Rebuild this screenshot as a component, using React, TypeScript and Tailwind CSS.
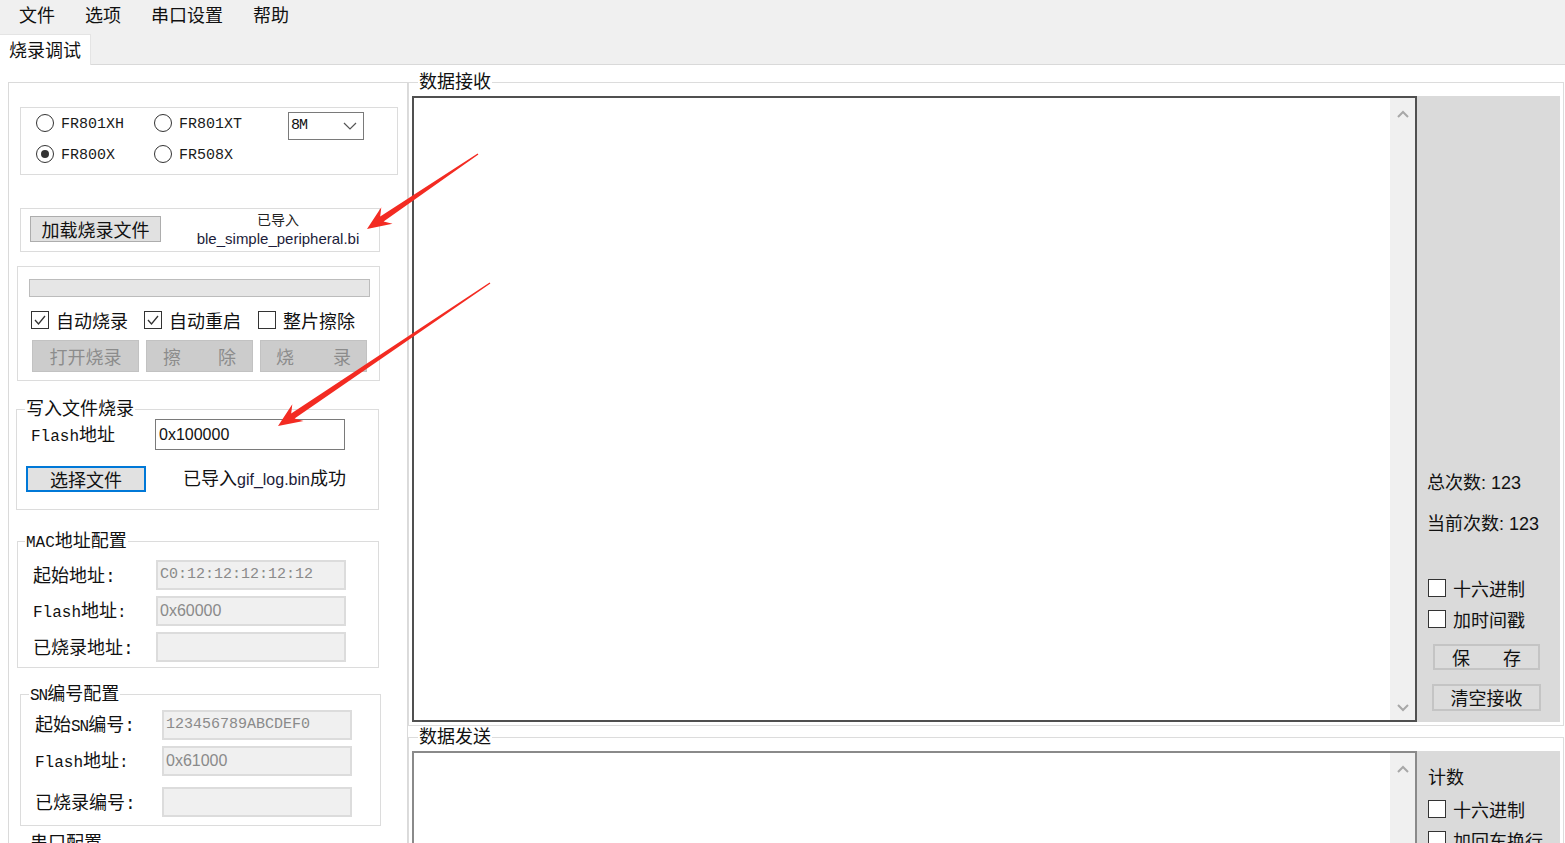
const cjk = "font-['Noto_Sans_CJK_SC','Noto_Sans',sans-serif]";
const mono = "font-['Liberation_Mono','Noto_Sans_CJK_SC',monospace]";
const sans = "font-['Liberation_Sans','Noto_Sans_CJK_SC',sans-serif]";

function Radio({ label, checked }: { label: string; checked?: boolean }) {
  return (
    <div className="flex items-center h-[24px] gap-[7px]">
      <span className="w-[18px] h-[18px] rounded-full border border-[#333] bg-white flex items-center justify-center">
        {checked && <span className="w-[8px] h-[8px] rounded-full bg-[#333]" />}
      </span>
      <span className={`${mono} relative top-[2px] text-[15px] text-[#1a1a1a]`}>{label}</span>
    </div>
  );
}

function Check({ label, checked, className = "" }: { label: string; checked?: boolean; className?: string }) {
  return (
    <div className={`flex items-center h-[22px] gap-[7px] ${className}`}>
      <span className="w-[18px] h-[18px] border border-[#333] bg-white flex items-center justify-center">
        {checked && (
          <svg width="14" height="14" viewBox="0 0 14 14">
            <polyline points="2,7 5.5,11 12,3" fill="none" stroke="#333" strokeWidth="1.3" />
          </svg>
        )}
      </span>
      <span className={`${cjk} text-[18px] leading-[22px] text-[#111]`}>{label}</span>
    </div>
  );
}

function Field({ label, value, labelW, mt = "", wide = "" }: { label: React.ReactNode; value: string; labelW: string; mt?: string; wide?: string }) {
  return (
    <div className={`flex items-center h-[30px] ${mt}`}>
      <div className={`${labelW} ${cjk} text-[18px] leading-[24px] text-[#111]`}>{label}</div>
      <div className={`w-[190px] h-[30px] border-2 border-[#dcdcdc] bg-[#f0f0f0] flex items-center pl-[2px] text-[#8a8a8a] ${wide}`}>{value}</div>
    </div>
  );
}

function Flash({ colon }: { colon?: boolean }) {
  return (
    <span>
      <span className={`${mono} text-[16px]`}>Flash</span>地址{colon && <span className={`${mono} text-[16px]`}>:</span>}
    </span>
  );
}

function Chevron({ up }: { up?: boolean }) {
  return (
    <svg width="12" height="8" viewBox="0 0 12 8">
      <polyline points={up ? "1,7 6,2 11,7" : "1,1 6,6 11,1"} fill="none" stroke="#a8a8a8" strokeWidth="2" />
    </svg>
  );
}

function arrow(tx: number, ty: number, px: number, py: number) {
  const dx = px - tx, dy = py - ty;
  const L = Math.hypot(dx, dy);
  const ux = dx / L, uy = dy / L, nx = -uy, ny = ux;
  const hl = 24, hw = 10, notch = 6, s0 = 0.7, s1 = 3;
  const bx = px - ux * hl, by = py - uy * hl;
  const jx = px - ux * (hl - notch), jy = py - uy * (hl - notch);
  const p = [
    [tx + nx * s0, ty + ny * s0],
    [jx + nx * s1, jy + ny * s1],
    [bx + nx * hw, by + ny * hw],
    [px, py],
    [bx - nx * hw, by - ny * hw],
    [jx - nx * s1, jy - ny * s1],
    [tx - nx * s0, ty - ny * s0],
  ];
  return p.map((q) => q.map((v) => v.toFixed(1)).join(",")).join(" ");
}

const legend = "relative top-[-2px] h-[20px] px-[1px] text-[18px] leading-[20px] whitespace-nowrap";

export default function App() {
  return (
    <div className={`relative w-[1565px] h-[843px] overflow-hidden bg-white ${cjk} text-[#111]`}>
      {/* menu */}
      <div className="h-[33px] bg-[#f0f0f0] flex items-center gap-[30px] pl-[19px] pb-[6px] text-[18px] leading-[24px]">
        <span>文件</span>
        <span>选项</span>
        <span>串口设置</span>
        <span>帮助</span>
      </div>
      {/* tabs */}
      <div className="h-[32px] bg-[#f0f0f0] border-b border-[#d9d9d9] flex items-end">
        <div className="h-[31px] -mb-px bg-white border-r border-t border-[#e4e4e4] px-[9px] text-[18px] leading-[28px]">烧录调试</div>
      </div>

      <div className="flex">
        {/* left panel */}
        <div className="ml-[8px] mt-[17px] w-[400px] h-[800px] shrink-0 border border-[#dadada]">
          <div className="mt-[24px] ml-[11px] w-[378px] h-[68px] border border-[#dcdcdc] flex items-start">
            <div className="grid grid-cols-[118px_118px] content-start gap-y-[7px] pl-[15px] pt-[3px]">
              <Radio label="FR801XH" />
              <Radio label="FR801XT" />
              <Radio label="FR800X" checked />
              <Radio label="FR508X" />
            </div>
            <div className="ml-[16px] mt-[4px] w-[76px] h-[28px] border border-[#7a7a7a] bg-white flex items-center justify-between pl-[2px] pr-[6px]">
              <span className={`${mono} text-[15px] tracking-[-1px]`}>8M</span>
              <svg width="14" height="8" viewBox="0 0 14 8">
                <polyline points="1,1 7,7 13,1" fill="none" stroke="#555" strokeWidth="1.2" />
              </svg>
            </div>
          </div>

          <div className="mt-[33px] ml-[11px] w-[360px] h-[44px] border border-[#dcdcdc] flex items-start">
            <div className="ml-[9px] mt-[7px] w-[131px] h-[26px] bg-[#e1e1e1] border border-[#adadad] text-[18px] leading-[24px] text-center">加载烧录文件</div>
            <div className="ml-[17px] w-[200px] text-center">
              <div className="text-[14px] leading-[20px] text-[#222]">已导入</div>
              <div className={`${sans} text-[15px] leading-[20px] text-[#1c1c3a]`}>ble_simple_peripheral.bi</div>
            </div>
          </div>

          <div className="mt-[14px] ml-[8px] w-[363px] border border-[#dcdcdc] pb-[8px]">
            <div className="ml-[11px] mt-[12px] w-[341px] h-[18px] bg-[#e6e6e6] border border-[#bcbcbc]" />
            <div className="mt-[12px] ml-[13px] flex">
              <Check label="自动烧录" checked className="w-[113px]" />
              <Check label="自动重启" checked className="w-[114px]" />
              <Check label="整片擦除" />
            </div>
            <div className="mt-[9px] ml-[14px] flex gap-[7px] text-[18px] leading-[30px] text-[#8c8c8c]">
              <div className="w-[107px] h-[32px] bg-[#cccccc] border border-[#c2c2c2] text-center">打开烧录</div>
              <div className="w-[107px] h-[32px] bg-[#cccccc] border border-[#c2c2c2] flex justify-between px-[16px]"><span>擦</span><span>除</span></div>
              <div className="w-[107px] h-[32px] bg-[#cccccc] border border-[#c2c2c2] flex justify-between px-[15px]"><span>烧</span><span>录</span></div>
            </div>
          </div>

          <fieldset className="mt-[18px] ml-[7px] w-[363px] border border-[#dcdcdc] pb-[17px]">
            <legend className={`${legend} ml-[8px]`}>写入文件烧录</legend>
            <div className="flex items-center h-[31px]">
              <div className="ml-[14px] w-[124px] text-[18px] leading-[24px]"><Flash /></div>
              <div className={`w-[190px] h-[31px] border border-[#7a7a7a] bg-white flex items-center pl-[3px] ${sans} text-[16px]`}>0x100000</div>
            </div>
            <div className="mt-[15px] flex items-center">
              <div className="ml-[9px] w-[120px] h-[26px] border-2 border-[#0078d7] bg-[#e1e1e1] text-[18px] leading-[22px] text-center">选择文件</div>
              <div className="ml-[37px] text-[18px] leading-[24px]">
                已导入<span className={`${sans} text-[16px] text-[#1c1c3a]`}>gif_log.bin</span>成功
              </div>
            </div>
          </fieldset>

          <fieldset className="mt-[21px] ml-[8px] w-[362px] border border-[#dcdcdc] pt-[9px] pb-[5px] flex flex-col gap-[6px]">
            <legend className={`${legend} ml-[7px]`}><span className={`${mono} text-[16px]`}>MAC</span>地址配置</legend>
            <Field label={<span>起始地址<span className={mono}>:</span></span>} value="C0:12:12:12:12:12" labelW="ml-[15px] w-[123px]" wide={`${mono} text-[15px]`} />
            <Field label={<Flash colon />} value="0x60000" labelW="ml-[15px] w-[123px]" wide={`${sans} text-[16px]`} />
            <Field label={<span>已烧录地址<span className={mono}>:</span></span>} value="" labelW="ml-[15px] w-[123px]" />
          </fieldset>

          <fieldset className="mt-[16px] ml-[11px] w-[361px] border border-[#dcdcdc] pt-[6px] pb-[8px] flex flex-col">
            <legend className={`${legend} ml-[8px]`}><span className={`${mono} text-[16px] tracking-[-1px]`}>SN</span>编号配置</legend>
            <Field label={<span>起始<span className={`${mono} text-[16px] tracking-[-1px]`}>SN</span>编号<span className={mono}>:</span></span>} value="123456789ABCDEF0" labelW="ml-[14px] w-[127px]" wide={`${mono} text-[15px]`} />
            <Field label={<Flash colon />} value="0x61000" labelW="ml-[14px] w-[127px]" wide={`${sans} text-[16px]`} mt="mt-[6px]" />
            <Field label={<span>已烧录编号<span className={mono}>:</span></span>} value="" labelW="ml-[14px] w-[127px]" mt="mt-[11px]" />
          </fieldset>

          <fieldset className="mt-[7px] ml-[11px] w-[361px] h-[60px] border border-[#dcdcdc]">
            <legend className={`${legend} ml-[8px]`}>串口配置</legend>
          </fieldset>
        </div>

        {/* right side */}
        <div className="flex flex-col">
          <fieldset className="mt-[7px] w-[1156px] border border-[#dcdcdc] pb-[3px]">
            <legend className={`${legend} ml-[9px]`}>数据接收</legend>
            <div className="mt-[4px] ml-[3px] h-[626px] flex">
              <div className="w-[1005px] border-2 border-[#505050] bg-white flex justify-end">
                <div className="w-[25px] bg-[#f0f0f0] flex flex-col items-center justify-between pt-[12px] pb-[8px]">
                  <Chevron up />
                  <Chevron />
                </div>
              </div>
              <div className="w-[143px] bg-[#dadada] flex flex-col justify-end pl-[10px] pb-[11px]">
                <div className="text-[18px] leading-[24px]">总次数<span className={sans}>: 123</span></div>
                <div className="mt-[15px] text-[18px] leading-[24px]">当前次数<span className={sans}>: 123</span></div>
                <Check label="十六进制" className="mt-[41px] ml-[1px]" />
                <Check label="加时间戳" className="mt-[9px] ml-[1px]" />
                <div className="mt-[14px] ml-[6px] w-[107px] h-[26px] border-2 border-[#c4c4c4] bg-[#dcdcdc] flex justify-between px-[17px] text-[18px] leading-[22px]"><span>保</span><span>存</span></div>
                <div className="mt-[14px] ml-[5px] w-[109px] h-[27px] border-2 border-[#c4c4c4] bg-[#dcdcdc] text-center text-[18px] leading-[23px]">清空接收</div>
              </div>
            </div>
          </fieldset>

          <fieldset className="mt-[1px] w-[1156px] h-[140px] border border-[#dcdcdc]">
            <legend className={`${legend} ml-[9px]`}>数据发送</legend>
            <div className="mt-[4px] ml-[3px] h-[120px] flex">
              <div className="w-[1005px] border-2 border-[#8a8a8a] bg-white flex justify-end">
                <div className="w-[25px] bg-[#f0f0f0] flex flex-col items-center pt-[12px]">
                  <Chevron up />
                </div>
              </div>
              <div className="w-[143px] bg-[#dadada] flex flex-col pl-[11px] pt-[13px]">
                <div className="text-[18px] leading-[24px]">计数</div>
                <Check label="十六进制" className="mt-[10px]" />
                <Check label="加回车换行" className="mt-[9px]" />
              </div>
            </div>
          </fieldset>
        </div>
      </div>

      {/* annotation arrows */}
      <svg className="absolute inset-0 pointer-events-none" width="1565" height="843">
        <polygon points={arrow(478, 154, 367, 229)} fill="#f32b22" />
        <polygon points={arrow(490, 283, 278, 426)} fill="#f32b22" />
      </svg>
    </div>
  );
}
